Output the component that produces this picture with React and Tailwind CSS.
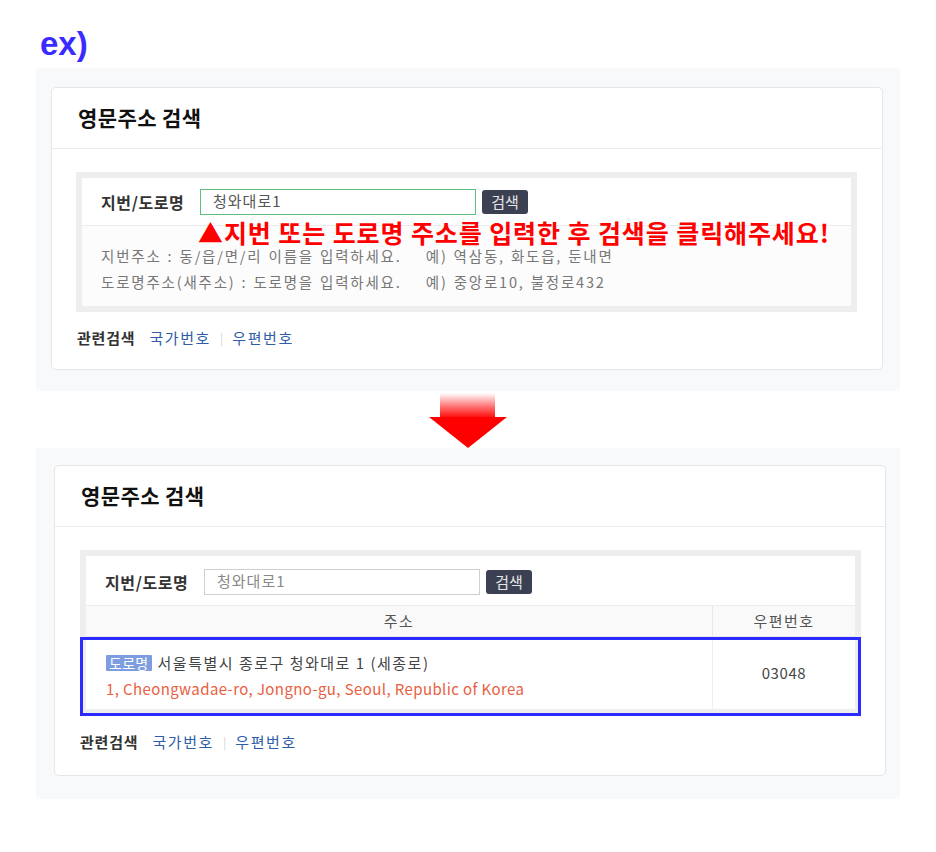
import React from 'react';

const FONT = { fontFamily: '"Noto Sans CJK KR", "Noto Sans", sans-serif' };

const RelatedSearch = () => (
  <div className="flex items-center text-[15px] leading-[20px]">
    <span className="font-bold text-[#333] tracking-[0.8px]">관련검색</span>
    <span className="ml-[14px] text-[#2f5ea8] tracking-[1.6px]">국가번호</span>
    <span className="mx-[9px] text-[#d4d4d4] text-[12px]">|</span>
    <span className="text-[#2f5ea8] tracking-[1.6px]">우편번호</span>
  </div>
);

const SearchRow = ({ focused }) => (
  <div className={`flex items-center ${focused ? 'h-[48px]' : 'h-[50px] pt-[2px]'} pl-[19px] border-b border-[#ececec] bg-white`}>
    <span className="text-[16px] font-bold text-[#333] w-[99px] tracking-[0.6px]">지번/도로명</span>
    <div
      className={`w-[276px] h-[26px] border ${focused ? 'border-[#5cbf80]' : 'border-[#cfcfcf]'} bg-white flex items-center pl-[12px] text-[15px] tracking-[1px] ${focused ? 'text-[#555]' : 'text-[#888]'}`}
    >
      청와대로1
    </div>
    <button className="ml-[6px] w-[46px] h-[24px] rounded-[3px] bg-[#3b4153] text-[#e6e6e6] text-[15px] leading-none">
      검색
    </button>
  </div>
);

const CardHeader = () => (
  <div className="h-[61px] flex items-center pl-[26px] border-b border-[#ececec]">
    <h2 className="text-[21px] font-bold text-[#111] tracking-[0.4px]">영문주소 검색</h2>
  </div>
);

const DownArrow = () => (
  <svg width="80" height="56" viewBox="0 0 80 56">
    <defs>
      <linearGradient id="shaft" x1="0" y1="0" x2="0" y2="1">
        <stop offset="0" stopColor="#ffffff" />
        <stop offset="0.55" stopColor="#ff6b6b" />
        <stop offset="1" stopColor="#ff0000" />
      </linearGradient>
    </defs>
    <rect x="11" y="0" width="55" height="26" fill="url(#shaft)" />
    <polygon points="0,24 78,24 39,55" fill="#ff0000" />
  </svg>
);

export default function App() {
  return (
    <div className="bg-white w-[936px] h-[852px]" style={FONT}>
      <div className="pt-[24px] pl-[40px] h-[68px]">
        <span className="text-[33px] leading-[40px] font-bold text-[#3a2cff]" style={{ fontFamily: '"Liberation Sans", Arial, sans-serif' }}>
          ex)
        </span>
      </div>

      {/* before */}
      <div className="ml-[36px] w-[864px] bg-[#f8f9fb] pl-[15px] pr-[17px] pt-[19px] pb-[21px]">
        <div className="bg-white border border-[#e6e6e6] rounded-[5px]">
          <CardHeader />
          <div className="pt-[23px] pl-[24px] pr-[25px] pb-[0px]">
            <div className="relative bg-[#eeeeee] p-[6px]">
              <SearchRow focused />
              <div className="bg-[#fcfcfc] pt-[20px] pb-[14px] pl-[19px] flex flex-col gap-[6px] text-[14.5px] leading-[20px] text-[#777] tracking-[1.8px] [word-spacing:1px]">
                <div>지번주소 : 동/읍/면/리 이름을 입력하세요.&nbsp;&nbsp;&nbsp; 예) 역삼동, 화도읍, 둔내면</div>
                <div>도로명주소(새주소) : 도로명을 입력하세요.&nbsp;&nbsp;&nbsp; 예) 중앙로10, 불정로432</div>
              </div>
              <div className="absolute left-[122px] top-[48px] text-[25px] leading-[24px] font-bold text-[#ff0000] whitespace-nowrap tracking-[0.9px]">
                ▲지번 또는 도로명 주소를 입력한 후 검색을 클릭해주세요!
              </div>
            </div>
            <div className="pt-[16px] pb-[21px] pl-[1px]">
              <RelatedSearch />
            </div>
          </div>
        </div>
      </div>

      <div className="h-[57px] flex justify-center pt-[2px] pl-[2px]">
        <DownArrow />
      </div>

      {/* after */}
      <div className="ml-[36px] w-[864px] bg-[#f8f9fb] pl-[18px] pr-[14px] pt-[17px] pb-[23px]">
        <div className="bg-white border border-[#e6e6e6] rounded-[5px]">
          <CardHeader />
          <div className="pt-[23px] pl-[25px] pr-[24px]">
            <div className="relative bg-[#eeeeee] p-[6px]">
              <SearchRow />
              <div className="flex h-[31px] bg-[#f9f9f9] border-b border-[#e8e8e8] text-[15px] text-[#555] tracking-[1.4px]">
                <div className="flex-1 flex items-center justify-center border-r border-[#e8e8e8]">주소</div>
                <div className="w-[142px] flex items-center justify-center">우편번호</div>
              </div>
              <div className="flex h-[72px] bg-white">
                <div className="flex-1 border-r border-[#eeeeee] pl-[20px] pt-[13px]">
                  <div className="flex items-center h-[26px]">
                    <span className="bg-[#7d9de0] text-white text-[14px] leading-[16px] px-[3px] rounded-[1px] tracking-[0.3px]">도로명</span>
                    <span className="ml-[6px] text-[15px] text-[#444] tracking-[1.5px]">서울특별시 종로구 청와대로 1 (세종로)</span>
                  </div>
                  <div className="h-[26px] flex items-center text-[15px] text-[#e9603f] tracking-[0.4px]">
                    1, Cheongwadae-ro, Jongno-gu, Seoul, Republic of Korea
                  </div>
                </div>
                <div className="w-[142px] flex items-center justify-center text-[15px] text-[#444] tracking-[0.6px]">03048</div>
              </div>
              <div className="absolute left-0 right-0 top-[87px] bottom-[-1px] border-[3px] border-[#2b2bff]" />
            </div>
            <div className="pt-[17px] pb-[23px]">
              <RelatedSearch />
            </div>
          </div>
        </div>
      </div>
    </div>
  );
}
